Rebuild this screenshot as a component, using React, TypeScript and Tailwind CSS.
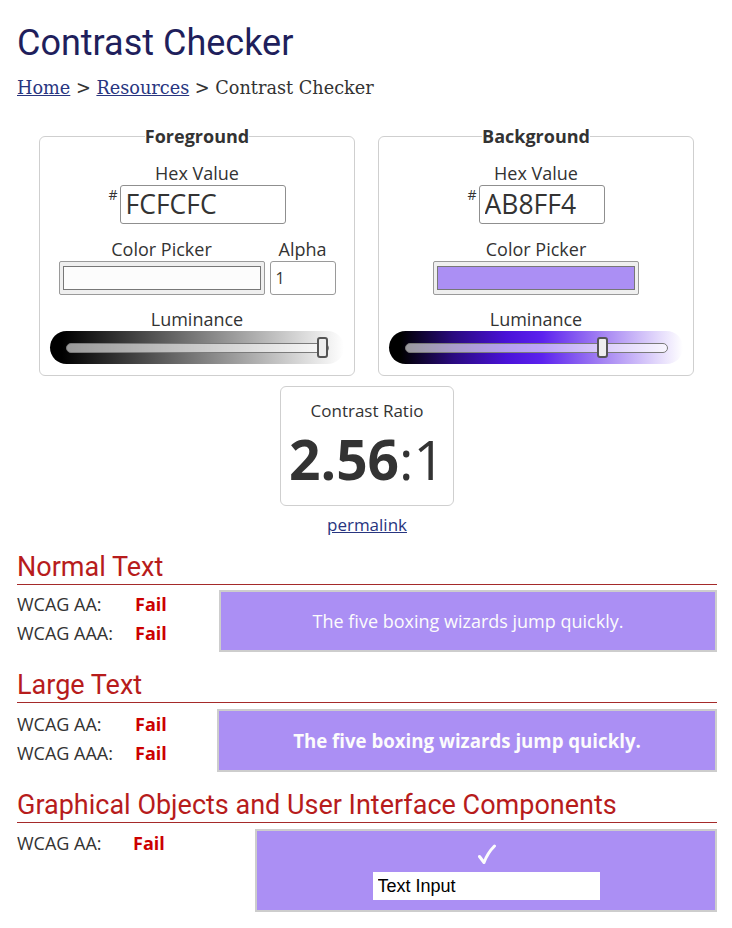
import React from "react";

const FG = "#FCFCFC";
const BG = "#AB8FF4";

function Slider({ gradient, thumb }: { gradient: string; thumb: string }) {
  return (
    <div className={`relative mx-[10px] flex h-[33px] items-center rounded-full pl-[16px] pr-[15px] ${gradient}`}>
      <div className="h-[10px] flex-1 rounded-full border border-[#7a7a7a] bg-white/60" />
      <div className={`absolute top-[6px] h-[21px] w-[11px] rounded-[3px] border-2 border-[#555] bg-[#eee] ${thumb}`} />
    </div>
  );
}

function HexField({ value, width }: { value: string; width: string }) {
  return (
    <div className="flex items-start justify-center">
      <span className="mr-[2px] mt-[2px] text-[14px] leading-[16px]">#</span>
      <input
        readOnly
        value={value}
        className={`h-[39px] ${width} rounded-[3px] border border-[#8f8f8f] bg-white pl-[5px] text-[26.5px] text-[#333] outline-none`}
      />
    </div>
  );
}

function Swatch({ color }: { color: string }) {
  return (
    <div className="h-[34px] w-[206px] rounded-[2px] border border-[#9a9a9a] bg-[#efefef] px-[3px] py-[4px]">
      <div className="h-full w-full border border-[#777]" style={{ backgroundColor: color }} />
    </div>
  );
}

function Panel({ title, children }: { title: string; children: React.ReactNode }) {
  return (
    <fieldset className="w-[316px] rounded-[6px] border border-[#cfcfcf] px-0 pb-[11px] pt-[13px]">
      <legend className="mx-auto px-0 text-[18px] font-bold leading-[24px] text-[#333]">{title}</legend>
      <div className="flex flex-col items-center">{children}</div>
    </fieldset>
  );
}

function Label({ children }: { children: React.ReactNode }) {
  return <div className="text-[18px] leading-[24px] text-[#333]">{children}</div>;
}

function Result({ label, labelWidth }: { label: string; labelWidth: string }) {
  return (
    <div className="flex text-[18px] leading-[29px]">
      <span className={labelWidth}>{label}</span>
      <span className="font-bold text-[#c00]">Fail</span>
    </div>
  );
}

function Section({ title, children }: { title: string; children: React.ReactNode }) {
  return (
    <>
      <h2 className="border-b border-[#a52a2a] font-['Roboto',sans-serif] text-[27px] leading-[34px] text-[#b71c1c]">
        {title}
      </h2>
      {children}
    </>
  );
}

export default function App() {
  return (
    <div className="min-h-[928px] w-[732px] bg-white pl-[17px] pr-[15px] pt-[22px] font-['Open_Sans',sans-serif] text-[16px] text-[#333]">
      <h1 className="font-['Roboto',sans-serif] text-[36px] leading-[42px] text-[#1f1f5c]">Contrast Checker</h1>
      <nav className="mt-[12px] font-['DejaVu_Serif',serif] text-[17.7px] leading-[24px] text-[#333]">
        <a href="#" className="text-[#28357f] underline">Home</a> &gt;{" "}
        <a href="#" className="text-[#28357f] underline">Resources</a> &gt; Contrast Checker
      </nav>

      <div className="-ml-[1px] mt-[24px] flex justify-center gap-[23px]">
        <Panel title="Foreground">
          <Label>Hex Value</Label>
          <HexField value="FCFCFC" width="w-[166px]" />
          <div className="mt-[13px] flex gap-[5px]">
            <div className="flex flex-col items-center">
              <Label>Color Picker</Label>
              <Swatch color={FG} />
            </div>
            <div className="flex flex-col items-center">
              <Label>Alpha</Label>
              <input
                readOnly
                value="1"
                className="h-[34px] w-[66px] rounded-[3px] border border-[#9a9a9a] pl-[5px] text-[16px] outline-none"
              />
            </div>
          </div>
          <div className="mt-[12px] w-full">
            <div className="text-center"><Label>Luminance</Label></div>
            <Slider gradient="bg-[linear-gradient(to_right,#000_4%,#fff_100%)]" thumb="left-[267px]" />
          </div>
        </Panel>
        <Panel title="Background">
          <Label>Hex Value</Label>
          <HexField value="AB8FF4" width="w-[126px]" />
          <div className="mt-[13px] flex flex-col items-center">
            <Label>Color Picker</Label>
            <Swatch color={BG} />
          </div>
          <div className="mt-[12px] w-full">
            <div className="text-center"><Label>Luminance</Label></div>
            <Slider
              gradient="bg-[linear-gradient(to_right,#000_4%,#2a0a80_22%,#4a12d8_40%,#5c22ee_52%,#a98af3_74%,#fff_100%)]"
              thumb="left-[208px]"
            />
          </div>
        </Panel>
      </div>

      <div className="mt-[10px] flex flex-col items-center">
        <div className="flex h-[120px] w-[174px] flex-col items-center rounded-[6px] border border-[#cfcfcf] pt-[12px]">
          <div className="text-[17px] leading-[24px]">Contrast Ratio</div>
          <div className="mt-[3px] text-[55px] leading-[66px] text-[#333]">
            <span className="font-bold">2.56</span>:1
          </div>
        </div>
        <a href="#" className="mt-[7px] text-[17px] leading-[24px] text-[#28357f] underline">permalink</a>
      </div>

      <div className="mt-[13px]">
        <Section title="Normal Text">
          <div className="mt-[5px] flex">
            <div className="w-[202px]">
              <Result label="WCAG AA:" labelWidth="w-[118px]" />
              <Result label="WCAG AAA:" labelWidth="w-[118px]" />
            </div>
            <div className="flex h-[62px] flex-1 items-center justify-center border-2 border-[#cdcdcd] bg-[#AB8FF4] text-[18px] text-[#FCFCFC]">
              The five boxing wizards jump quickly.
            </div>
          </div>
        </Section>
      </div>

      <div className="mt-[16px]">
        <Section title="Large Text">
          <div className="mt-[6px] flex">
            <div className="w-[200px] pt-[1px]">
              <Result label="WCAG AA:" labelWidth="w-[118px]" />
              <Result label="WCAG AAA:" labelWidth="w-[118px]" />
            </div>
            <div className="flex h-[63px] flex-1 items-center justify-center border-2 border-[#cdcdcd] bg-[#AB8FF4] text-[18.66px] font-bold text-[#FCFCFC]">
              The five boxing wizards jump quickly.
            </div>
          </div>
        </Section>
      </div>

      <div className="mt-[16px]">
        <Section title="Graphical Objects and User Interface Components">
          <div className="mt-[6px] flex">
            <div className="w-[238px]">
              <Result label="WCAG AA:" labelWidth="w-[116px]" />
            </div>
            <div className="flex h-[83px] flex-1 flex-col items-center border-2 border-[#cdcdcd] bg-[#AB8FF4] pt-[13px]">
              <svg width="20" height="21" viewBox="0 0 20 21" className="ml-[2px]" fill="none">
                <path
                  d="M2.5 12.5 L7 18.5 Q10.5 9 17.5 2"
                  stroke="#FCFCFC"
                  strokeWidth="3"
                  strokeLinecap="round"
                  strokeLinejoin="round"
                />
              </svg>
              <input
                readOnly
                value="Text Input"
                className="mt-[7px] h-[28px] w-[227px] bg-white pl-[5px] font-['Liberation_Sans',sans-serif] text-[18px] text-black outline-none"
              />
            </div>
          </div>
        </Section>
      </div>
    </div>
  );
}
